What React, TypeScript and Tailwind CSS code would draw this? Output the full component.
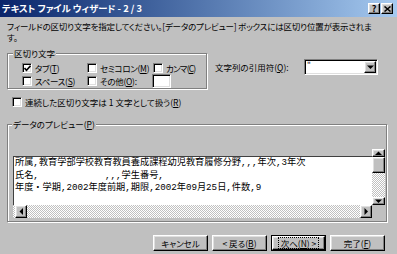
import React from "react";

const raised =
  "border border-t-white border-l-white border-r-black border-b-black bg-[#c0c0c0] shadow-[inset_-1px_-1px_0_#808080,inset_1px_1px_0_#dfdfdf]";
const sunken =
  "border border-t-[#808080] border-l-[#808080] border-r-white border-b-white bg-white shadow-[inset_1px_1px_0_#000,inset_-1px_-1px_0_#dfdfdf]";
const dither = "bg-[repeating-conic-gradient(#ffffff_0_25%,#c0c0c0_0_50%)] bg-[length:2px_2px]";
const etched = "border border-[#808080] shadow-[inset_1px_1px_0_#ffffff,1px_1px_0_#ffffff]";

const Key = ({ k }: { k: string }) => (
  <>
    (<span className="underline underline-offset-1">{k}</span>)
  </>
);

const Check = ({ checked = false }: { checked?: boolean }) => (
  <span className={`${sunken} flex h-[10px] w-[10px] shrink-0 items-center justify-center`}>
    {checked && (
      <svg width="7" height="7" viewBox="0 0 7 7">
        <path d="M0.5 3 L2.5 5.2 L6.5 0.8" stroke="#000" strokeWidth="1.6" fill="none" />
      </svg>
    )}
  </span>
);

const Option = ({
  label,
  k,
  suffix = "",
  checked,
  tight = false,
}: {
  label: string;
  k: string;
  suffix?: string;
  checked?: boolean;
  tight?: boolean;
}) => (
  <div className="flex items-center gap-[3px] whitespace-nowrap">
    <Check checked={checked} />
    <span className={tight ? "tracking-[-0.8px]" : "tracking-[-0.3px]"}>
      {label}
      <Key k={k} />
      {suffix}
    </span>
  </div>
);

const Arrow = ({ dir }: { dir: "up" | "down" | "left" | "right" }) => {
  const pts = {
    up: "0,4 3.5,0.5 7,4",
    down: "0,0.5 3.5,4 7,0.5",
    left: "4,0 0.5,3.5 4,7",
    right: "0.5,0 4,3.5 0.5,7",
  }[dir];
  const vertical = dir === "up" || dir === "down";
  return (
    <svg width={vertical ? 7 : 5} height={vertical ? 5 : 7} viewBox={vertical ? "0 0 7 5" : "0 0 5 7"}>
      <polygon points={pts} fill="#000" />
    </svg>
  );
};

const Button = ({ children, primary = false }: { children: React.ReactNode; primary?: boolean }) => (
  <div className={`flex h-[16px] w-[55px] shrink-0 items-center justify-center ${primary ? "border border-black" : ""}`}>
    <div className={`${raised} flex h-full w-full items-center justify-center`}>
      <span
        className={
          primary
            ? "whitespace-nowrap border border-dotted border-black px-[2px] leading-[10px]"
            : "whitespace-nowrap leading-[10px]"
        }
      >
        {children}
      </span>
    </div>
  </div>
);

export default function App() {
  return (
    <div className="flex h-[254px] w-[397px] flex-col overflow-hidden bg-[#c0c0c0] font-['Noto_Sans_CJK_JP',sans-serif] text-[8.5px] leading-[11px] text-black [font-feature-settings:'palt']">
      {/* title bar */}
      <div className="flex h-[17px] shrink-0 items-center justify-between bg-gradient-to-r from-[#0a246a] to-[#a6caf0] pl-[2px] pr-[4px]">
        <span className="whitespace-nowrap text-[9.3px] font-bold text-white">テキスト ファイル ウィザード - 2 / 3</span>
        <div className="flex gap-[1px]">
          <div className={`${raised} flex h-[11px] w-[12px] items-center justify-center text-[9px] font-bold leading-none`}>?</div>
          <div className={`${raised} flex h-[11px] w-[12px] items-center justify-center`}>
            <svg width="7" height="6" viewBox="0 0 7 6">
              <path d="M0.5 0.5 L6.5 5.5 M6.5 0.5 L0.5 5.5" stroke="#000" strokeWidth="1.5" />
            </svg>
          </div>
        </div>
      </div>

      <div className="flex flex-1 flex-col px-[7px]">
        <p className="mt-[4px] h-[22px] shrink-0 whitespace-nowrap leading-[11px] tracking-[-0.2px]">
          フィールドの区切り文字を指定してください。[データのプレビュー] ボックスには区切り位置が表示されま
          <br />
          す。
        </p>

        <div className="mt-[10px] flex shrink-0">
          <div className={`${etched} relative h-[36px] w-[200px] shrink-0 pl-[14px] pt-[8px]`}>
            <span className="absolute -top-[6px] left-[5px] bg-[#c0c0c0] px-[1px] leading-[11px]">区切り文字</span>
            <div className="grid grid-cols-[65px_66px_auto] grid-rows-[12px_14px] items-center">
              <Option label="タブ" k="T" checked />
              <Option label="セミコロン" k="M" />
              <Option label="カンマ" k="C" tight />
              <Option label="スペース" k="S" />
              <Option label="その他" k="O" suffix=":" />
              <div className={`${sunken} -ml-[1px] h-[14px] w-[19px]`} />
            </div>
          </div>
          <div className="ml-[8px] flex items-center self-start pt-[6px]">
            <span className="w-[89px] whitespace-nowrap">
              文字列の引用符<Key k="Q" />:
            </span>
            <div className={`${sunken} flex h-[16px] w-[74px] items-stretch`}>
              <span className="flex-1 pl-[2px] text-[8px] leading-[9px]">"</span>
              <div className={`${raised} my-[1px] mr-[1px] flex w-[12px] items-center justify-center`}>
                <Arrow dir="down" />
              </div>
            </div>
          </div>
        </div>

        <div className="ml-[5px] mt-[7px] flex h-[12px] shrink-0 items-center gap-[3px] whitespace-nowrap">
          <Check />
          <span>
            連続した区切り文字は 1 文字として扱う<Key k="R" />
          </span>
        </div>

        <div className={`${etched} relative mr-[3px] mt-[16px] h-[98px] shrink-0 pb-[3px] pl-[5px] pr-[1px] pt-[24px]`}>
          <span className="absolute -top-[6px] left-[4px] whitespace-nowrap bg-[#c0c0c0] px-[1px] leading-[11px]">
            データのプレビュー<Key k="P" />
          </span>
          <div className="flex h-[69px]">
            <div className="flex w-[359px] shrink-0 flex-col">
              <div className="h-[7px] shrink-0" />
              <div className="h-[49px] shrink-0 overflow-hidden whitespace-pre border-l border-t border-[#404040] bg-white pl-[1px] font-['Liberation_Mono','Noto_Sans_CJK_JP',monospace] text-[9.2px] leading-[12.5px] [font-feature-settings:normal]">
                <div>所属,教育学部学校教育教員養成課程幼児教育履修分野,,,年次,3年次</div>
                <div>氏名,            ,,,学生番号,</div>
                <div>年度・学期,2002年度前期,期限,2002年09月25日,件数,9</div>
              </div>
              <div className={`flex h-[13px] shrink-0 ${dither}`}>
                <div className={`${raised} ml-[2px] flex w-[12px] items-center justify-center`}>
                  <Arrow dir="left" />
                </div>
                <div className="flex-1" />
                <div className={`${raised} flex w-[12px] items-center justify-center`}>
                  <Arrow dir="right" />
                </div>
              </div>
            </div>
            <div className="flex w-[13px] shrink-0 flex-col">
              <div className={`${raised} flex h-[8px] shrink-0 items-center justify-center`}>
                <Arrow dir="up" />
              </div>
              <div className={`${raised} h-[16px] shrink-0`} />
              <div className={`flex-1 ${dither}`} />
              <div className={`${raised} flex h-[8px] shrink-0 items-center justify-center`}>
                <Arrow dir="down" />
              </div>
              <div className="h-[13px] shrink-0" />
            </div>
          </div>
        </div>

        <div className="mr-[5px] mt-[13px] flex shrink-0 justify-end gap-[4px]">
          <Button>キャンセル</Button>
          <Button>
            &lt; 戻る<Key k="B" />
          </Button>
          <Button primary>
            次へ<Key k="N" /> &gt;
          </Button>
          <Button>
            完了<Key k="F" />
          </Button>
        </div>
      </div>
    </div>
  );
}
